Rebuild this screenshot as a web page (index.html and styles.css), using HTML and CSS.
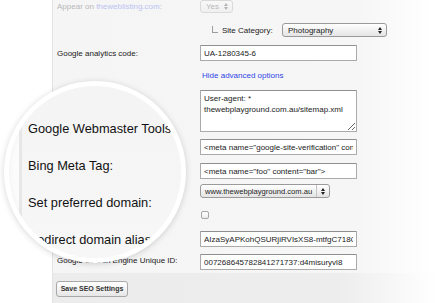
FILE: index.html
```html
<!DOCTYPE html>
<html lang="en">
<head>
  <meta charset="UTF-8" />
  <meta name="viewport" content="width=device-width, initial-scale=1.0"/>
  <title>SEO Settings</title>
  <link rel="stylesheet" href="styles.css">
</head>
<body>
  <div class="panel">
    <div class="form">
      <div class="row faded">
        <span class="label">Appear on <span class="blue">theweblisting.com</span>:</span>
        <div class="select select-yes">
          <span>Yes</span>
          <svg class="arrows" width="4" height="7" viewBox="0 0 4 7"><path d="M0 3 L2 0 L4 3 Z M0 4 L2 7 L4 4 Z"/></svg>
        </div>
      </div>

      <div class="row">
        <span class="label"></span>
        <span class="elbow"></span>
        <span class="sub-label">Site Category:</span>
        <div class="select select-cat">
          <span>Photography</span>
          <svg class="arrows" width="4" height="7" viewBox="0 0 4 7"><path d="M0 3 L2 0 L4 3 Z M0 4 L2 7 L4 4 Z"/></svg>
        </div>
      </div>

      <div class="row">
        <span class="label">Google analytics code:</span>
        <input class="field" type="text" value="UA-1280345-6" readonly>
      </div>

      <div class="row">
        <span class="label"></span>
        <a class="link" href="#">Hide advanced options</a>
      </div>

      <div class="row row-top">
        <span class="label hidden-label">Robots.txt</span>
        <textarea class="field area" readonly>User-agent: *
thewebplayground.com.au/sitemap.xml</textarea>
      </div>

      <div class="row">
        <span class="label hidden-label">Google Webmaster Tools</span>
        <input class="field" type="text" value='&lt;meta name="google-site-verification" content="abc"&gt;' readonly>
      </div>

      <div class="row">
        <span class="label hidden-label">Bing Meta Tag:</span>
        <input class="field" type="text" value='&lt;meta name="foo" content="bar"&gt;' readonly>
      </div>

      <div class="row">
        <span class="label hidden-label">Set preferred domain:</span>
        <div class="select select-domain">
          <span>www.thewebplayground.com.au</span>
          <span class="arrow-box">
            <svg class="arrows" width="4" height="7" viewBox="0 0 4 7"><path d="M0 3 L2 0 L4 3 Z M0 4 L2 7 L4 4 Z"/></svg>
          </span>
        </div>
      </div>

      <div class="row">
        <span class="label hidden-label">Redirect domain alias</span>
        <input class="check" type="checkbox">
      </div>

      <div class="row">
        <span class="label hidden-label">Google API key:</span>
        <input class="field" type="text" value="AIzaSyAPKohQSURjiRVIsXS8-mtfgC718GxYz" readonly>
      </div>

      <div class="row">
        <span class="label label-low">Google Search Engine Unique ID:</span>
        <input class="field" type="text" value="007268645782841271737:d4misuryvl8" readonly>
      </div>
    </div>

    <div class="footer">
      <button class="btn" type="button">Save SEO Settings</button>
    </div>
  </div>

  <div class="lens">
    <div class="lens-panel">
      <div class="lens-label">Google Webmaster Tools</div>
      <div class="lens-label">Bing Meta Tag:</div>
      <div class="lens-label">Set preferred domain:</div>
      <div class="lens-label">Redirect domain alias</div>
    </div>
  </div>
</body>
</html>
```

FILE: styles.css
```css
* { box-sizing: border-box; }

body {
  margin: 0;
  width: 436px;
  height: 303px;
  overflow: hidden;
  position: relative;
  background: #fff;
  font-family: 'Liberation Sans', Arial, sans-serif;
  color: #1a1a1a;
}

.panel {
  margin-left: 52px;
  height: 303px;
  border-left: 1px solid #e3e3e3;
  background: linear-gradient(to right, #f5f5f5 0%, #f6f6f6 80%, #fff 100%);
}

.form {
  display: grid;
  grid-template-rows: 23px 22px 26px 19px 49px 24px 21px 26px 21px 23px 19px;
  padding-left: 4px;
}

.row {
  display: flex;
  align-items: center;
  align-self: start;
  font-size: 8px;
}

.row-top { align-items: flex-start; }

.faded { opacity: 0.3; }

.label {
  width: 143px;
  flex-shrink: 0;
  white-space: nowrap;
  overflow: hidden;
}

/* these sit under the magnifier */
.hidden-label { visibility: hidden; }

.label-low { margin-top: -3px; }

.blue { color: #2f45e6; }

.elbow {
  width: 6px;
  height: 7px;
  margin: 0 4px 1px 12px;
  border-left: 1px solid #9c9c9c;
  border-bottom: 1px solid #9c9c9c;
}

.sub-label { width: 60px; }

.select {
  display: flex;
  align-items: center;
  justify-content: space-between;
  height: 14px;
  padding: 0 4px 0 5px;
  border: 1px solid #9a9a9a;
  border-radius: 3px;
  background: linear-gradient(#fff, #e4e4e4);
  font-size: 8px;
  color: #222;
}

.select-yes { width: 33px; height: 13px; }
.select-cat { width: 105px; }

.select-domain {
  width: 130px;
  padding: 0 0 0 4px;
  font-size: 7.6px;
  white-space: nowrap;
}

.arrows { fill: #222; }

.arrow-box {
  display: flex;
  align-items: center;
  height: 100%;
  padding: 0 4px 0 4px;
  border-left: 1px solid #c4c4c4;
}

.field {
  width: 157px;
  height: 16px;
  margin: 0;
  padding: 0 3px;
  border: 1px solid #aaa;
  border-top-color: #8f8f8f;
  border-radius: 1px;
  background: #fff;
  font-family: 'Liberation Sans', Arial, sans-serif;
  font-size: 8px;
  color: #222;
  outline: none;
}

.area {
  height: 42px;
  padding: 2px 3px;
  line-height: 11px;
  resize: both;
  overflow: hidden;
}

.link {
  margin-left: 2px;
  color: #2f45e6;
  text-decoration: none;
  font-size: 8px;
  line-height: 10px;
}

.check {
  appearance: none;
  width: 8px;
  height: 8px;
  margin: 0 0 0 1px;
  border: 1px solid #a5a5a5;
  border-radius: 2px;
  background: linear-gradient(#fff, #ececec);
}

.footer {
  height: 30px;
  padding: 4px 0 0 3px;
  background: linear-gradient(to right, #ececec 0%, #ededed 75%, #fff 100%);
}

.btn {
  width: 72px;
  height: 16px;
  padding: 0;
  border: 1px solid #a8a8a8;
  border-radius: 3px;
  background: linear-gradient(#fff, #e6e6e6);
  font-family: 'Liberation Sans', Arial, sans-serif;
  font-size: 7px;
  font-weight: bold;
  color: #333;
}

/* magnifier over the labels */
.lens {
  position: absolute;
  left: 4px;
  top: 81px;
  width: 182px;
  height: 182px;
  border-radius: 50%;
  border: 5px solid #fff;
  background: #fbfbfb;
  overflow: hidden;
  box-shadow: 0 1px 6px rgba(0, 0, 0, 0.16), inset 0 0 5px rgba(0, 0, 0, 0.05);
}

.lens-panel {
  margin-left: 10px;
  height: 100%;
  padding: 24px 0 0 6px;
  border-left: 3px solid #e7e7e7;
  background: linear-gradient(#f4f4f4, #f7f7f7);
}

.lens-label {
  height: 37px;
  line-height: 37px;
  font-size: 12.8px;
  white-space: nowrap;
  color: #111;
}
```
